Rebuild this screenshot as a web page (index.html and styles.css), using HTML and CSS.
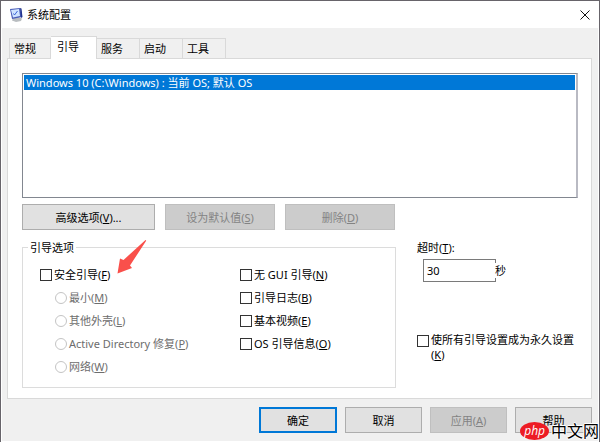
FILE: index.html
```html
<!DOCTYPE html>
<html lang="zh-CN">
<head>
<meta charset="utf-8">
<title>系统配置</title>
<link rel="stylesheet" href="styles.css">
</head>
<body>
<main class="window">
  <header class="titlebar">
    <svg class="app-icon" viewBox="0 0 14 14" aria-hidden="true">
      <path d="M4 10l5-1 4 1.500-1 2.500-5 1-4-1.500z" fill="#b9bdc0"/>
      <path d="M1 1l10-1 2 9-10 2z" fill="#4a5db8"/>
      <path d="M2 2l8-1 1 7-7 1.500z" fill="#cfe4ff"/>
      <path d="M11 0l1.500.500 1 8.500-1.500 1z" fill="#22338d"/>
      <path d="M4.500 5.500l1 1.500 3-4" fill="none" stroke="#3b63d6"/>
    </svg>
    <h1 class="title">系统配置</h1>
    <button class="close" aria-label="关闭">
      <svg viewBox="0 0 10 10" class="close-icon" aria-hidden="true"><path d="M.5.5l9 9M9.500.5l-9 9" stroke="#111" fill="none"/></svg>
    </button>
  </header>
  <div class="content">
    <nav class="tabs" role="tablist">
      <button class="tab" role="tab">常规</button>
      <button class="tab active" role="tab" aria-selected="true">引导</button>
      <button class="tab" role="tab">服务</button>
      <button class="tab" role="tab">启动</button>
      <button class="tab" role="tab">工具</button>
    </nav>
    <section class="panel">
      <ul class="boot-list">
        <li class="boot-entry">Windows 10 (C:\Windows) : 当前 OS; 默认 OS</li>
      </ul>
      <div class="actions">
        <button class="btn wide">高级选项(<u>V</u>)...</button>
        <button class="btn" disabled>设为默认值(<u>S</u>)</button>
        <button class="btn" disabled>删除(<u>D</u>)</button>
      </div>
      <div class="settings">
        <fieldset class="options">
          <legend>引导选项</legend>
          <div class="column">
            <label class="choice"><input type="checkbox"><span>安全引导(<u>F</u>)</span></label>
            <label class="choice sub"><input type="radio" name="safe" disabled><span>最小(<u>M</u>)</span></label>
            <label class="choice sub"><input type="radio" name="safe" disabled><span>其他外壳(<u>L</u>)</span></label>
            <label class="choice sub"><input type="radio" name="safe" disabled><span>Active Directory 修复(<u>P</u>)</span></label>
            <label class="choice sub"><input type="radio" name="safe" disabled><span>网络(<u>W</u>)</span></label>
          </div>
          <div class="column">
            <label class="choice"><input type="checkbox"><span>无 GUI 引导(<u>N</u>)</span></label>
            <label class="choice"><input type="checkbox"><span>引导日志(<u>B</u>)</span></label>
            <label class="choice"><input type="checkbox"><span>基本视频(<u>E</u>)</span></label>
            <label class="choice"><input type="checkbox"><span>OS 引导信息(<u>O</u>)</span></label>
          </div>
          <svg class="arrow" viewBox="0 0 30 34" aria-hidden="true"><path d="M28.500 0q1 0 .500 1L13 25.500l2 2.500-14.500 5.500L3 18.500l3.500 1.500z" fill="#f9504b"/></svg>
        </fieldset>
        <div class="side">
          <label for="timeout">超时(<u>T</u>):</label>
          <div class="timeout">
            <input id="timeout" type="text" value="30"><span class="unit">秒</span>
          </div>
          <label class="choice permanent"><input type="checkbox"><span>使所有引导设置成为永久设置(<u>K</u>)</span></label>
        </div>
      </div>
    </section>
    <footer class="footer">
      <button class="btn primary">确定</button>
      <button class="btn">取消</button>
      <button class="btn" disabled>应用(<u>A</u>)</button>
      <button class="btn">帮助</button>
    </footer>
  </div>
  <div class="watermark"><span class="php">php</span><span class="site">中文网</span></div>
</main>
</body>
</html>
```
FILE: styles.css
```css
* { box-sizing: border-box; }

body {
  margin: 0;
  padding: 1px;
  background: #67646a;
  color: #000;
  font: 11px/15px "Noto Sans", "Noto Sans CJK SC", sans-serif;
}

button, input { font: inherit; color: inherit; margin: 0; }

u { text-underline-offset: 1px; }

.window {
  position: relative;
  display: flex;
  flex-direction: column;
  min-height: calc(100vh - 2px);
  background: #f0f0f0;
  border: 1px solid #fff;
  border-top: 0;
}

.titlebar {
  display: flex;
  align-items: center;
  height: 27px;
  padding: 0 8px 0 7px;
  background: #fff;
}

.app-icon { width: 14px; height: 14px; }

.title { flex: 1; margin: 0 0 0 4px; font-size: 11px; font-weight: 400; }

.close { display: flex; padding: 0; border: 0; background: none; }

.close-icon { width: 10px; height: 10px; }

.content { padding: 8px 6px 8px 5px; }

.tabs { display: flex; align-items: flex-end; padding-left: 2px; }

.tab {
  flex: 0 0 43px;
  height: 20px;
  padding: 0 10px 0 4px;
  border: 1px solid #d9d9d9;
  border-width: 1px 1px 0 0;
  background: #f0f0f0;
  text-align: left;
}

.tab:first-child { flex-basis: 42px; border-left-width: 1px; }

.tab.active {
  flex-basis: 46px;
  height: 23px;
  margin-bottom: -1px;
  padding: 0 6px 3px;
  background: #fff;
  z-index: 1;
}

.panel {
  padding: 14px 13px 10px 14px;
  border: 1px solid #d9d9d9;
  background: #fff;
}

.boot-list {
  height: 125px;
  margin: 0;
  padding: 1px;
  border: 1px solid #828790;
  border-right: 2px solid #b9bac3;
  list-style: none;
}

.boot-entry {
  padding-left: 2px;
  background: #0078d7;
  color: #fff;
}

.actions { display: flex; gap: 10px; margin-top: 6px; }

.btn {
  width: 110px;
  height: 26px;
  padding: 0;
  border: 1px solid #adadad;
  background: #e1e1e1;
}

.btn.wide { width: 133px; }

.btn:disabled { background: #ccc; border-color: #bfbfbf; color: #838383; }

.btn.primary { border: 2px solid #0078d7; }

.settings { display: flex; gap: 21px; margin-top: 10px; }

.options {
  position: relative;
  display: grid;
  grid-template-columns: 200px 1fr;
  flex: 0 0 374px;
  height: 148px;
  margin: 0;
  padding: 8px 0 0 17px;
  border: 1px solid #dcdcdc;
}

.options legend { margin-left: -12px; padding: 0 2px; }

.choice { display: flex; align-items: center; gap: 2px; height: 23px; }

.choice.sub { padding-left: 15px; color: #6d6d6d; }

.choice input {
  flex: none;
  appearance: none;
  width: 12px;
  height: 12px;
  border: 1px solid #333;
  background: #fff;
}

.choice input[type="radio"] { border-color: #c4c4c4; border-radius: 50%; }

.arrow { position: absolute; left: 94px; top: -15px; width: 30px; height: 34px; }

.side { flex: 1; }

.timeout { display: flex; align-items: center; margin: 4px 0 0 6px; }

.timeout input {
  width: 73px;
  height: 23px;
  padding: 0 3px;
  border: 1px solid #7a7a7a;
}

.unit { margin-left: -1px; background: #fff; }

.choice.permanent { align-items: flex-start; height: auto; margin-top: 50px; }

.choice.permanent input { margin-top: 3px; }

.footer { display: flex; justify-content: flex-end; gap: 8px; margin-top: 8px; }

.footer .btn { width: 78px; }

.footer .btn:not(.primary) { width: 77px; }

.watermark {
  position: absolute;
  right: -1px;
  bottom: -1px;
  display: flex;
  align-items: center;
  gap: 2px;
}

.php {
  padding: 0 4px;
  border-radius: 50%;
  background: #ed1c24;
  color: #fff;
  font: italic 12px/18px "Open Sans", sans-serif;
}

.site {
  font-size: 16px;
  line-height: 22px;
  text-shadow: 1px 0 #fff, -1px 0 #fff, 0 1px #fff, 0 -1px #fff;
}
```
